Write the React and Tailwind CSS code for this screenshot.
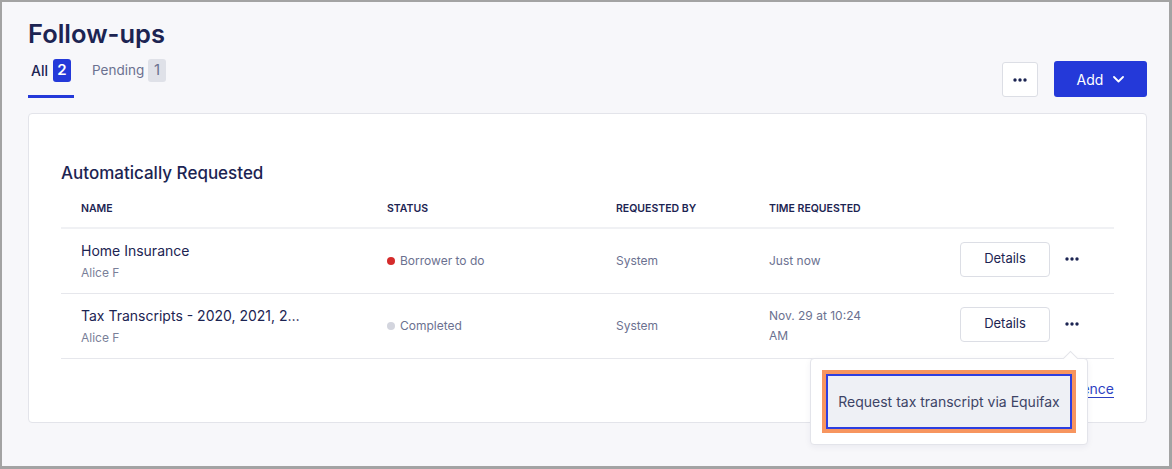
import React from "react";

const Dots = ({ className = "" }) => (
  <svg width="14" height="4" viewBox="0 0 14 4" className={className} fill="currentColor">
    <circle cx="2" cy="2" r="1.7" />
    <circle cx="7" cy="2" r="1.7" />
    <circle cx="12" cy="2" r="1.7" />
  </svg>
);

const rows = [
  {
    name: "Home Insurance",
    owner: "Alice F",
    status: "Borrower to do",
    dot: "bg-[#d42b2b]",
    by: "System",
    time: "Just now",
  },
  {
    name: "Tax Transcripts - 2020, 2021, 2…",
    owner: "Alice F",
    status: "Completed",
    dot: "bg-[#d3d5de]",
    by: "System",
    time: "Nov. 29 at 10:24 AM",
  },
];

const cols = "grid grid-cols-[326px_229px_153px_100px_1fr]";

export default function App() {
  return (
    <div
      className="w-[1172px] h-[469px] box-border bg-[#f7f7fa] border-t-2 border-l-2 border-r-[3px] border-b-[3px] border-[#a3a3a3] pl-[26px] pr-[22px] pt-[14px] text-[#1c2452]"
      style={{ fontFamily: "Inter, 'Noto Sans', sans-serif" }}
    >
      {/* header */}
      <div className="flex justify-between items-end">
        <div>
          <h1 className="text-[25.5px] leading-[35px] font-semibold">Follow-ups</h1>
          <div className="flex gap-[15px] mt-[8px]">
            <div className="flex items-center gap-[5px] px-[3px] pb-[13px] border-b-[3px] border-[#2439d9]">
              <span className="text-[14px] font-medium">All</span>
              <span className="w-[18px] h-[23px] rounded-[3px] bg-[#2439d9] text-white text-[15px] font-semibold flex items-center justify-center">
                2
              </span>
            </div>
            <div className="flex items-center gap-[4px] px-[3px] pb-[13px] border-b-[3px] border-transparent">
              <span className="text-[13.5px] text-[#6b7190]">Pending</span>
              <span className="w-[18px] h-[23px] rounded-[3px] bg-[#dfe1e8] text-[#6b7190] text-[15px] flex items-center justify-center">
                1
              </span>
            </div>
          </div>
        </div>
        <div className="flex items-end gap-4 mb-[1px]">
          <button className="w-[36px] h-[35px] bg-white border border-[#dcdee5] rounded-[3px] flex items-center justify-center text-[#1c2452]">
            <Dots />
          </button>
          <button className="w-[93px] h-[36px] bg-[#2439d9] rounded-[3px] text-white text-[14px] flex items-center justify-center gap-[10px]">
            <span>Add</span>
            <svg width="11" height="7" viewBox="0 0 11 7" fill="none" stroke="currentColor" strokeWidth="1.8" strokeLinecap="round" strokeLinejoin="round">
              <path d="M1 1l4.5 4.5L10 1" />
            </svg>
          </button>
        </div>
      </div>

      {/* card */}
      <div className="relative mt-[15px] bg-white border border-[#e3e4ea] rounded-[4px] px-8 pt-[47px] pb-[23px]">
        <h2 className="text-[17px] leading-[24px] font-medium">Automatically Requested</h2>

        <div className={`${cols} mt-4 pb-[10px] border-b-2 border-[#f0f1f4] text-[10.5px] leading-[16px] font-semibold uppercase`}>
          <div className="pl-5">Name</div>
          <div>Status</div>
          <div>Requested By</div>
          <div>Time Requested</div>
          <div />
        </div>

        {rows.map((r, i) => (
          <div key={i} className={`${cols} h-[65px] items-center border-b border-[#e6e7ec]`}>
            <div className="pl-5 pr-6 min-w-0">
              <div className="text-[14px] leading-[20px] whitespace-nowrap">{r.name}</div>
              <div className="mt-1 text-[12px] leading-[16px] text-[#7a7f99]">{r.owner}</div>
            </div>
            <div className="flex items-center gap-[5px] text-[12px] text-[#6b7190]">
              <span className={`w-2 h-2 rounded-full ${r.dot}`} />
              {r.status}
            </div>
            <div className="text-[12px] text-[#6b7190]">{r.by}</div>
            <div className="text-[12px] leading-[20px] text-[#6b7190]">{r.time}</div>
            <div className="flex items-center justify-end gap-[15px] pr-[35px] mb-1">
              <button className="w-[90px] h-[35px] bg-white border border-[#dcdee5] rounded-[4px] text-[13px]">
                Details
              </button>
              <Dots />
            </div>
          </div>
        ))}

        <div className="flex justify-end mt-5">
          <a className="text-[14px] leading-[20px] text-[#2d3fc2] underline underline-offset-[3px]">Request evidence</a>
        </div>

        {/* popover */}
        <div className="absolute right-[58px] top-[244px] bg-white border border-[#e3e4ea] rounded-[4px] p-[11px] shadow-[0_2px_6px_rgba(30,40,80,0.06)]">
          <div className="absolute -top-[6px] right-[11px] w-[11px] h-[11px] bg-white border-l border-t border-[#e3e4ea] rotate-45" />
          <div className="bg-[#f7955f] p-1">
            <button className="w-[246px] h-[55px] border-2 border-[#2d3fe0] bg-[#eef0f5] text-[14px] text-[#3d4466] flex items-center justify-center">
              Request tax transcript via Equifax
            </button>
          </div>
        </div>
      </div>
    </div>
  );
}
